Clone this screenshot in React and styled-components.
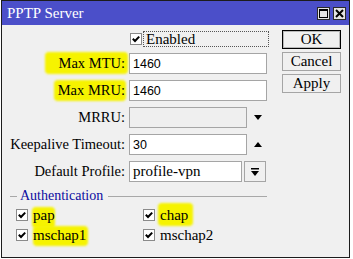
import React from "react";
import styled, { createGlobalStyle } from "styled-components";

const GlobalStyle = createGlobalStyle`
  html, body {
    margin: 0;
    padding: 0;
    background: #fff;
  }
  body {
    font-family: "Liberation Serif", "Times New Roman", serif;
    color: #000;
  }
`;

const Page = styled.div`
  width: 353px;
  height: 259px;
  box-sizing: border-box;
  padding-left: 1px;
  background: #fff;
  overflow: hidden;
`;

const Window = styled.div`
  width: 349px;
  height: 258px;
  box-sizing: border-box;
  border: 1px solid #1c1c1c;
  background: #f0f0f0;
  display: flex;
  flex-direction: column;
`;

const TitleBar = styled.div`
  height: 24px;
  flex: none;
  background: #4b4fc9;
  color: #fff;
  display: flex;
  align-items: center;
  padding: 0 3px 0 5px;
  font-size: 15px;
`;

const Title = styled.div`
  flex: 1;
  padding-top: 1px;
`;

const TitleButtons = styled.div`
  display: flex;
  gap: 3px;
  margin-top: 1px;
`;

const TitleButton = styled.div`
  width: 13px;
  height: 13px;
  box-sizing: border-box;
  border: 1px solid #2a2a2a;
  background: #e4e4e4;
  display: flex;
  align-items: center;
  justify-content: center;
`;

const Body = styled.div`
  flex: 1;
  display: flex;
`;

const Form = styled.div`
  width: 268px;
  padding-top: 6px;
`;

const FieldGrid = styled.div`
  display: grid;
  grid-template-columns: 123px auto;
  column-gap: 4px;
  row-gap: 6px;
  align-items: center;
`;

const Label = styled.div`
  text-align: right;
  font-size: 14.5px;
  white-space: nowrap;
`;

const Mark = styled.span`
  position: relative;
  z-index: 0;
  &::before {
    content: "";
    position: absolute;
    z-index: -1;
    top: ${(p) => -p.$t}px;
    bottom: ${(p) => -p.$b}px;
    left: ${(p) => -p.$l}px;
    right: ${(p) => -p.$r}px;
    background: #f6f300;
    border-radius: 4px;
    filter: blur(0.8px);
  }
`;

const Cell = styled.div`
  display: flex;
  align-items: center;
  gap: ${(p) => p.$gap || 0}px;
`;

const EnabledRow = styled.div`
  grid-column: 2;
  height: 16px;
  display: flex;
  align-items: center;
  margin-left: 1px;
`;

const FocusText = styled.div`
  flex: 1;
  margin-left: 1px;
  height: 16px;
  box-sizing: border-box;
  border: 1px dotted #555;
  padding-left: 2px;
  font-size: 15px;
  line-height: 14px;
  margin-right: 1px;
`;

const Input = styled.div`
  width: ${(p) => p.$w}px;
  height: 21px;
  box-sizing: border-box;
  border: 1px solid #a5a5a5;
  background: ${(p) => (p.$disabled ? "#efefef" : "#fff")};
  display: flex;
  align-items: center;
  padding-left: 3px;
  font-family: ${(p) =>
    p.$serif
      ? `"Liberation Serif", "Times New Roman", serif`
      : `"Liberation Sans", Arial, sans-serif`};
  font-size: ${(p) => (p.$serif ? 15 : 12.5)}px;
`;

const Arrow = styled.div`
  width: 8px;
  margin-left: 7px;
  display: flex;
`;

const DropButton = styled.div`
  width: 22px;
  height: 21px;
  box-sizing: border-box;
  border: 1px solid #a5a5a5;
  background: #f0f0f0;
  display: flex;
  align-items: center;
  justify-content: center;
`;

const Auth = styled.div`
  margin-top: 7px;
`;

const Legend = styled.div`
  display: flex;
  align-items: center;
  padding-left: 8px;
  margin-right: 3px;
  height: 14px;
  color: #0c0ca0;
  font-size: 14px;
`;

const Rule = styled.div`
  height: 1px;
  background: #a8a8a8;
  width: ${(p) => (p.$w ? `${p.$w}px` : "auto")};
  flex: ${(p) => (p.$w ? "none" : 1)};
  margin: ${(p) => p.$m};
`;

const CheckGrid = styled.div`
  display: grid;
  grid-template-columns: 127px 1fr;
  row-gap: 6px;
  padding-left: 14px;
  margin-top: 5px;
`;

const CheckItem = styled.div`
  display: flex;
  align-items: center;
  gap: 5px;
  font-size: 15px;
  height: 14px;
`;

const ButtonCol = styled.div`
  margin-left: 12px;
  padding-top: 5px;
  display: flex;
  flex-direction: column;
  gap: 3px;
`;

const Button = styled.div`
  width: 59px;
  height: 19px;
  box-sizing: border-box;
  border: 1px solid ${(p) => (p.$default ? "#000" : "#a5a5a5")};
  box-shadow: ${(p) => (p.$default ? "inset 0 0 0 1px #b8b8b8" : "none")};
  background: #f0f0f0;
  display: flex;
  align-items: center;
  justify-content: center;
  font-size: 15px;
`;

const CheckBox = () => (
  <svg width="12" height="12" viewBox="0 0 12 12">
    <rect x="0.5" y="0.5" width="11" height="11" fill="#fff" stroke="#8a8a8a" />
    <path d="M2.8 5.8 L5 8 L9.2 3.6" fill="none" stroke="#000" strokeWidth="2" />
  </svg>
);

const Field = ({ label, mark, children }) => (
  <>
    <Label>{mark ? <Mark {...mark}>{label}</Mark> : label}</Label>
    <Cell>{children}</Cell>
  </>
);

const Check = ({ label, mark }) => (
  <CheckItem>
    <CheckBox />
    {mark ? <Mark {...mark}>{label}</Mark> : <span>{label}</span>}
  </CheckItem>
);

export default function App() {
  return (
    <Page>
      <GlobalStyle />
      <Window>
        <TitleBar>
          <Title>PPTP Server</Title>
          <TitleButtons>
            <TitleButton>
              <svg width="9" height="9" viewBox="0 0 9 9">
                <rect x="0.5" y="0.5" width="8" height="8" fill="none" stroke="#000" />
                <rect x="0" y="0" width="9" height="2" fill="#000" />
              </svg>
            </TitleButton>
            <TitleButton>
              <svg width="9" height="9" viewBox="0 0 9 9">
                <path d="M1 1 L8 8 M8 1 L1 8" stroke="#000" strokeWidth="2" />
              </svg>
            </TitleButton>
          </TitleButtons>
        </TitleBar>
        <Body>
          <Form>
            <FieldGrid>
              <EnabledRow>
                <CheckBox />
                <FocusText>Enabled</FocusText>
              </EnabledRow>
              <Field label="Max MTU:" mark={{ $t: 3, $b: 3, $l: 14, $r: 3 }}>
                <Input $w={138}>1460</Input>
              </Field>
              <Field label="Max MRU:" mark={{ $t: 2, $b: 3, $l: 4, $r: 1 }}>
                <Input $w={138}>1460</Input>
              </Field>
              <Field label="MRRU:">
                <Input $w={118} $disabled />
                <Arrow>
                  <svg width="8" height="5" viewBox="0 0 8 5">
                    <path d="M0 0 H8 L4 5 Z" fill="#000" />
                  </svg>
                </Arrow>
              </Field>
              <Field label="Keepalive Timeout:">
                <Input $w={118}>30</Input>
                <Arrow>
                  <svg width="8" height="5" viewBox="0 0 8 5">
                    <path d="M0 5 H8 L4 0 Z" fill="#000" />
                  </svg>
                </Arrow>
              </Field>
              <Field label="Default Profile:">
                <Cell $gap={2}>
                  <Input $w={113} $serif>
                    profile-vpn
                  </Input>
                  <DropButton>
                    <svg width="8" height="8" viewBox="0 0 8 8">
                      <rect x="0" y="0" width="8" height="1.5" fill="#000" />
                      <path d="M0 3 H8 L4 8 Z" fill="#000" />
                    </svg>
                  </DropButton>
                </Cell>
              </Field>
            </FieldGrid>
            <Auth>
              <Legend>
                <Rule $w={7} $m="0 3px 0 0" />
                Authentication
                <Rule $m="0 0 0 5px" />
              </Legend>
              <CheckGrid>
                <Check label="pap" mark={{ $t: 0, $b: 4, $l: 1, $r: 0 }} />
                <Check label="chap" mark={{ $t: 4, $b: 2, $l: 2, $r: 5 }} />
                <Check label="mschap1" mark={{ $t: 1, $b: 2, $l: 0, $r: 2 }} />
                <Check label="mschap2" />
              </CheckGrid>
            </Auth>
          </Form>
          <ButtonCol>
            <Button $default>OK</Button>
            <Button>Cancel</Button>
            <Button>Apply</Button>
          </ButtonCol>
        </Body>
      </Window>
    </Page>
  );
}
